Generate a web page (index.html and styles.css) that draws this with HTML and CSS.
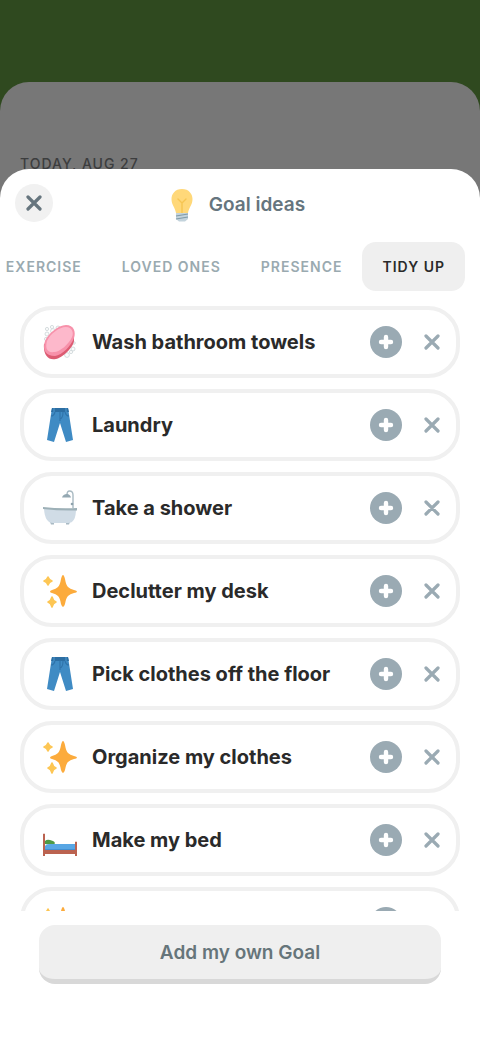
FILE: index.html
```html
<!DOCTYPE html>
<html lang="en">
<head>
  <meta charset="UTF-8">
  <meta name="viewport" content="width=device-width, initial-scale=1.0">
  <title>Goal ideas</title>
  <link rel="stylesheet" href="styles.css">
</head>
<body>

  <!-- shared icons -->
  <svg class="sprite" aria-hidden="true">
    <symbol id="cross" viewBox="0 0 16 16">
      <path d="M2 2 L14 14 M14 2 L2 14" fill="none" stroke="currentColor" stroke-width="3.2" stroke-linecap="round"/>
    </symbol>
    <symbol id="plus" viewBox="0 0 32 32">
      <circle cx="16" cy="16" r="16" fill="#9aaab3"/>
      <path d="M16 11 V21 M11 16 H21" fill="none" stroke="#fff" stroke-width="4.4" stroke-linecap="round"/>
    </symbol>
    <symbol id="soap" viewBox="0 0 36 36">
      <g fill="#fbfcfc" stroke="#ccd4d7" stroke-width="0.8">
        <circle cx="5" cy="5" r="1.6"/>
        <circle cx="10" cy="3" r="1.6"/>
        <circle cx="16" cy="4" r="2"/>
        <circle cx="11" cy="7" r="2.4"/>
        <circle cx="5" cy="10" r="2"/>
        <circle cx="4" cy="15" r="1.6"/>
        <circle cx="32" cy="19" r="1.3"/>
        <circle cx="31" cy="25" r="2"/>
        <circle cx="25" cy="31" r="2.4"/>
        <circle cx="29" cy="28" r="1.6"/>
      </g>
      <path d="M2 20 C1 30 6 37 14 35 C20 34 31 24 32 17 L32 10 Z" fill="#dc5b72"/>
      <path d="M3 17 C6 10 16 1 24 1 C32 1 34 8 32 14 C29 22 20 31 13 32 C4 32 0 26 3 17 Z" fill="#f791aa"/>
      <path d="M5 17 C8 10 17 3 24 3 C30 3 32 9 30 13 C27 20 18 28 12 28 C5 29 3 24 5 17 Z" fill="#fdb8cb"/>
    </symbol>
    <symbol id="jeans" viewBox="0 0 36 36">
      <path d="M10 1 H26 L31 33 L24 35 L18 16 L12 35 L5 33 Z" fill="#3f8bc4"/>
      <path d="M10 1 H26 L27 5 H9 Z" fill="#2c6ea3"/>
      <path d="M18 4 V14 M9 9 Q12 9 13 5 M27 9 Q24 9 23 5 M18 12 Q21 11 21 5" fill="none" stroke="#2f73aa" stroke-width="1.1"/>
      <path d="M12 1 V5 M24 1 V5" stroke="#4d98cf" stroke-width="1"/>
    </symbol>
    <symbol id="bath" viewBox="0 0 36 36">
      <path d="M31 18 V5 Q31 1 27.5 1 Q25 1 25 5" fill="none" stroke="#a9bac2" stroke-width="1.4"/>
      <path d="M20 7.500 Q21 4 25 4 Q28 4 29 7.500 Z" fill="#94a8b2"/>
      <circle cx="30" cy="14" r="1.3" fill="#8ea2ac"/>
      <path d="M8 32 h4 v2.500 h-3 Z M24 32 h4 l-1 2.500 h-3 Z" fill="#a9bac4"/>
      <path d="M2 19 H34 Q34 33 26 33 H11 Q3 33 2 19 Z" fill="#d0dce6"/>
      <path d="M1 17 Q18 19 35 18 V20.500 Q18 21 1 19 Z" fill="#9db0b7"/>
    </symbol>
    <symbol id="sparkles" viewBox="0 0 36 36">
      <path d="M21 2 Q22 2 23 6 Q24 12 26 14 Q28 16 32 17 Q35 17.500 35 18.500 Q35 19.500 32 20 Q28 21 26 23 Q24 25 23 31 Q22 34 21 34 Q20 34 19 31 Q18 25 16 23 Q14 21 10 20 Q8 19.500 8 18.500 Q8 17.500 10 17 Q14 16 16 14 Q18 12 19 6 Q20 2 21 2 Z" fill="#fcab3c"/>
      <path d="M6 4 Q7 7 10 8 Q7 9 6 12 Q5 9 2 8 Q5 7 6 4 Z M10 24 Q11 28 14 29 Q11 30 10 34 Q9 30 6 29 Q9 28 10 24 Z" fill="#fdc654" stroke="#fdc654" stroke-width="1.6" stroke-linejoin="round"/>
    </symbol>
    <symbol id="bed" viewBox="0 0 36 36">
      <path d="M3 22 V19 Q5 17 8 18 L11 19 Q14 20 12 23 Z" fill="#4f9a45"/>
      <path d="M3 29 V24 Q4 22 8 22 H33 V29 Z" fill="#58a6e4"/>
      <path d="M3 27 H33 V29 H3 Z" fill="#438fd1"/>
      <path d="M1 12 Q2 11 3 12 V28 H33 V20 Q34 19 35 20 V34 H33 V32 H3 V34 H1 Z" fill="#bb6350"/>
    </symbol>
  </svg>

  <div class="app">
    <div class="today">
      <div class="date">TODAY, AUG 27</div>
    </div>

    <main class="sheet">
      <header class="sheet-header">
        <button type="button" class="close" aria-label="Close">
          <svg><use href="#cross"/></svg>
        </button>
        <div class="title">
          <svg class="bulb" viewBox="0 0 24 34">
            <path d="M12 1 C5 1 1.500 6 1.500 11 C1.500 17 5 19 6 25 H18 C19 19 22.500 17 22.500 11 C22.500 6 19 1 12 1 Z" fill="#ffd879"/>
            <path d="M12 25 V15 L8 11 M12 15 L16 11" fill="none" stroke="#f6c552" stroke-width="1.4" stroke-linecap="round"/>
            <path d="M6 25 H18 V31 L15 33.500 H9 L6 31 Z" fill="#c3d3dc"/>
            <path d="M6 28 L18 26 M6 31 L18 29" stroke="#829ba8" stroke-width="1.2"/>
          </svg>
          <h1>Goal ideas</h1>
        </div>
      </header>

      <nav class="tabs">
        <button type="button" class="tab">EXERCISE</button>
        <button type="button" class="tab">LOVED ONES</button>
        <button type="button" class="tab">PRESENCE</button>
        <button type="button" class="tab active">TIDY UP</button>
      </nav>

      <ul class="goals">
        <li class="goal">
          <svg class="goal-icon"><use href="#soap"/></svg>
          <span class="goal-name">Wash bathroom towels</span>
          <button type="button" class="add" aria-label="Add"><svg><use href="#plus"/></svg></button>
          <button type="button" class="dismiss" aria-label="Dismiss"><svg><use href="#cross"/></svg></button>
        </li>
        <li class="goal">
          <svg class="goal-icon"><use href="#jeans"/></svg>
          <span class="goal-name">Laundry</span>
          <button type="button" class="add" aria-label="Add"><svg><use href="#plus"/></svg></button>
          <button type="button" class="dismiss" aria-label="Dismiss"><svg><use href="#cross"/></svg></button>
        </li>
        <li class="goal">
          <svg class="goal-icon"><use href="#bath"/></svg>
          <span class="goal-name">Take a shower</span>
          <button type="button" class="add" aria-label="Add"><svg><use href="#plus"/></svg></button>
          <button type="button" class="dismiss" aria-label="Dismiss"><svg><use href="#cross"/></svg></button>
        </li>
        <li class="goal">
          <svg class="goal-icon"><use href="#sparkles"/></svg>
          <span class="goal-name">Declutter my desk</span>
          <button type="button" class="add" aria-label="Add"><svg><use href="#plus"/></svg></button>
          <button type="button" class="dismiss" aria-label="Dismiss"><svg><use href="#cross"/></svg></button>
        </li>
        <li class="goal">
          <svg class="goal-icon"><use href="#jeans"/></svg>
          <span class="goal-name">Pick clothes off the floor</span>
          <button type="button" class="add" aria-label="Add"><svg><use href="#plus"/></svg></button>
          <button type="button" class="dismiss" aria-label="Dismiss"><svg><use href="#cross"/></svg></button>
        </li>
        <li class="goal">
          <svg class="goal-icon"><use href="#sparkles"/></svg>
          <span class="goal-name">Organize my clothes</span>
          <button type="button" class="add" aria-label="Add"><svg><use href="#plus"/></svg></button>
          <button type="button" class="dismiss" aria-label="Dismiss"><svg><use href="#cross"/></svg></button>
        </li>
        <li class="goal">
          <svg class="goal-icon"><use href="#bed"/></svg>
          <span class="goal-name">Make my bed</span>
          <button type="button" class="add" aria-label="Add"><svg><use href="#plus"/></svg></button>
          <button type="button" class="dismiss" aria-label="Dismiss"><svg><use href="#cross"/></svg></button>
        </li>
        <li class="goal">
          <svg class="goal-icon"><use href="#sparkles"/></svg>
          <span class="goal-name"></span>
          <button type="button" class="add" aria-label="Add"><svg><use href="#plus"/></svg></button>
          <button type="button" class="dismiss" aria-label="Dismiss"><svg><use href="#cross"/></svg></button>
        </li>
      </ul>

      <footer class="sheet-footer">
        <button type="button" class="add-own">Add my own Goal</button>
      </footer>
    </main>
  </div>

</body>
</html>
```
FILE: styles.css
```css
* {
  box-sizing: border-box;
}

body {
  margin: 0;
  height: 100vh;
  padding-top: 82px;
  background-color: #2f491f;
  font-family: Inter, Roboto, sans-serif;
  color: #2a2a2a;
}

button {
  border: none;
  background: none;
  padding: 0;
  font-family: inherit;
  cursor: pointer;
}

svg {
  display: block;
}

.sprite {
  display: none;
}

.app {
  height: 100%;
  display: flex;
  flex-direction: column;
  background-color: #777;
  border-radius: 29px 29px 0 0;
}

.today {
  height: 87px;
  flex-shrink: 0;
  padding: 72px 20px 0;
}

.date {
  font-size: 14px;
  line-height: 20px;
  font-weight: 500;
  letter-spacing: 1px;
  color: #3c3d3e;
}

.sheet {
  position: relative;
  flex: 1;
  min-height: 0;
  display: flex;
  flex-direction: column;
  background-color: #fff;
  border-radius: 29px 29px 0 0;
}

.sheet-header {
  display: grid;
  grid-template-columns: 38px 1fr 38px;
  align-items: center;
  padding: 15px 20px 0 15px;
}

.close {
  width: 38px;
  height: 38px;
  display: grid;
  place-items: center;
  border-radius: 50%;
  background-color: #f1f1f1;
  color: #66757e;
}

.close svg {
  width: 16px;
  height: 16px;
}

.title {
  display: flex;
  justify-content: center;
  align-items: center;
  gap: 15px;
  padding-top: 4px;
}

.bulb {
  width: 24px;
  height: 34px;
}

.title h1 {
  margin: 0;
  font-size: 19px;
  line-height: 24px;
  font-weight: 600;
  color: #66757e;
}

.tabs {
  display: flex;
  flex-shrink: 0;
  justify-content: flex-end;
  overflow: hidden;
  padding: 20px 15px 0 0;
}

.tab {
  flex-shrink: 0;
  height: 49px;
  padding: 0 20px;
  border-radius: 14px;
  font-size: 14px;
  font-weight: 600;
  letter-spacing: 1px;
  color: #9aaab0;
}

.tab.active {
  background-color: #efefef;
  color: #2a2a2a;
}

.goals {
  flex: 1;
  min-height: 0;
  overflow: hidden;
  display: flex;
  flex-direction: column;
  gap: 11px;
  margin: 0;
  padding: 15px 20px 0;
  list-style: none;
}

.goal {
  flex-shrink: 0;
  height: 72px;
  display: flex;
  align-items: center;
  gap: 14px;
  padding: 0 8px 0 18px;
  border: 4px solid #f0f0f0;
  border-radius: 32px;
}

.goal-icon {
  width: 36px;
  height: 36px;
}

.goal-name {
  flex: 1;
  font-size: 20px;
  line-height: 24px;
  font-weight: 700;
}

.add svg {
  width: 32px;
  height: 32px;
}

.dismiss {
  width: 32px;
  height: 32px;
  display: grid;
  place-items: center;
  color: #9aaab3;
}

.dismiss svg {
  width: 16px;
  height: 16px;
}

.sheet-footer {
  flex-shrink: 0;
  padding: 14px 39px 56px;
}

.add-own {
  width: 100%;
  height: 59px;
  border-bottom: 5px solid #d8d8d8;
  border-radius: 16px;
  background-color: #efefef;
  font-size: 19px;
  font-weight: 600;
  color: #66757a;
}
```
